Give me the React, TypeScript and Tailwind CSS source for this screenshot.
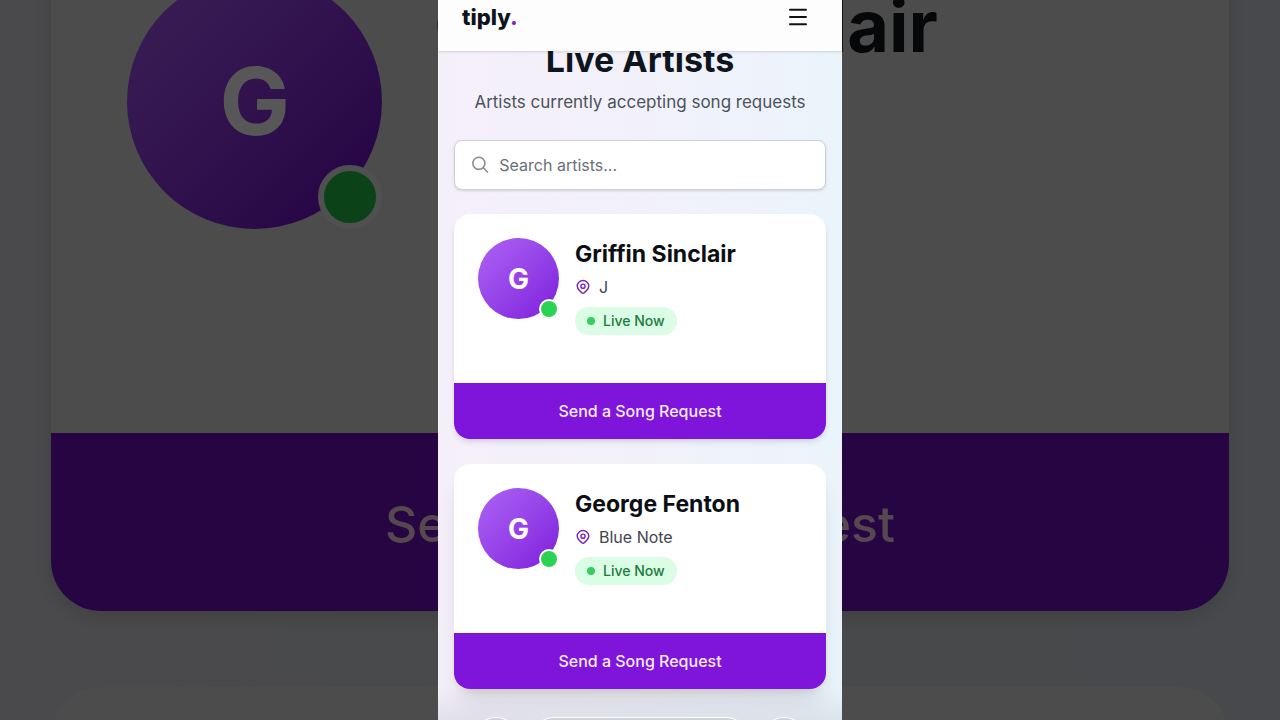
import { useState } from 'react';

type Artist = {
  id: number;
  name: string;
  location: string;
};

const artists: Artist[] = [
  { id: 1, name: 'Griffin Sinclair', location: 'J' },
  { id: 2, name: 'George Fenton', location: 'Blue Note' },
];

function MenuIcon() {
  return (
    <svg width="20" height="18" viewBox="0 0 20 18" fill="none" stroke="currentColor" strokeWidth="2" strokeLinecap="round">
      <path d="M2 1.7h16M2 9h16M2 16.3h16" />
    </svg>
  );
}

function SearchIcon() {
  return (
    <svg width="20" height="20" viewBox="0 0 20 20" fill="none" stroke="currentColor" strokeWidth="1.7" strokeLinecap="round">
      <circle cx="8.6" cy="8.2" r="6.6" />
      <path d="M13.4 13L18 17.6" />
    </svg>
  );
}

function PinIcon() {
  return (
    <svg width="16" height="16" viewBox="0 0 16 16" fill="none" stroke="currentColor" strokeWidth="1.4">
      <path d="M8 14.4C7.4 14.4 2.2 10.7 2.2 7.1a5.8 5.6 0 0 1 11.6 0C13.8 10.7 8.6 14.4 8 14.4z" strokeLinejoin="round" />
      <circle cx="8" cy="7.2" r="2.1" />
    </svg>
  );
}

// Oversized, dimmed copy of the first card behind the page
function Backdrop() {
  return (
    <div
      aria-hidden="true"
      className="absolute inset-0 overflow-hidden bg-linear-to-r from-[#4a4a4d] via-[#48494a] to-[#48494c] px-[4%]"
    >
      <div className="-mt-[102px] overflow-hidden rounded-[50px] bg-[#4c4c4c] shadow-[0_6px_16px_rgba(0,0,0,0.12)]">
        <div className="flex h-[535px] items-start gap-[52px] p-[76px]">
          <div className="relative flex size-[255px] shrink-0 items-center justify-center rounded-full bg-linear-to-br from-[#3c1f56] to-[#250243] text-[94px] font-bold text-[#575757]">
            G
            <span className="absolute right-0 bottom-0 size-[64px] rounded-full border-[6px] border-[#505050] bg-[#0c4218]" />
          </div>
          <p className="text-[72px] leading-[104px] font-bold whitespace-nowrap text-[#050709]">{artists[0].name}</p>
        </div>
        <div className="flex h-[178px] items-center justify-center bg-[#260542] pt-1 text-[50px] font-medium text-[#55494f]">
          Send a Song Request
        </div>
      </div>
      <div className="mt-[76px] h-[200px] rounded-[50px] bg-[#4c4c4c]" />
    </div>
  );
}

function ArtistCard({ artist }: { artist: Artist }) {
  return (
    <article className="overflow-hidden rounded-2xl bg-white shadow-md last:shadow-xl">
      <div className="flex items-start gap-4 px-6 pt-6 pb-12">
        <div className="relative flex size-[81px] shrink-0 items-center justify-center rounded-full bg-linear-to-br from-[#ae62f5] to-[#7f15db] text-[28px] font-bold text-white">
          {artist.name[0]}
          <span className="absolute right-0 bottom-0 size-5 rounded-full border-2 border-white bg-[#2bd354]" />
        </div>
        <div className="min-w-0">
          <h2 className="text-[23px] leading-[33px] font-bold text-[#0b0f14]">{artist.name}</h2>
          <p className="mt-1 flex items-center gap-2 text-base text-[#3f4650]">
            <span className="text-[#7a1fb8]">
              <PinIcon />
            </span>
            {artist.location}
          </p>
          <p className="mt-2 inline-flex h-7 items-center gap-2 rounded-full bg-[#dbfde5] px-3 text-sm font-medium text-[#207a3c]">
            <span className="size-2 rounded-full bg-[#35cf5d]" />
            Live Now
          </p>
        </div>
      </div>
      <button type="button" className="block h-14 w-full bg-[#7f15db] text-base font-medium text-[#f8ebff]">
        Send a Song Request
      </button>
    </article>
  );
}

export default function App() {
  const [query, setQuery] = useState('');

  const visible = artists.filter((a) => a.name.toLowerCase().includes(query.toLowerCase()));

  return (
    <div className="relative h-screen overflow-hidden bg-[#4a4a4c] font-[Inter,sans-serif]">
      <Backdrop />

      <div className="relative mx-auto h-full w-full max-w-[404px] overflow-hidden bg-linear-to-r from-[#f5effa] via-[#f2f1fa] to-[#ebf4fb]">
        <header className="relative z-10 flex h-[51px] items-start justify-between bg-[#fdfdfd] px-6 shadow-sm">
          <a href="#" className="text-[22px] leading-[34px] font-extrabold text-[#0f141c]">
            tiply<span className="text-[#8a1fd0]">.</span>
          </a>
          <button type="button" aria-label="Menu" className="flex h-[34px] items-center px-2.5 text-[#111111]">
            <MenuIcon />
          </button>
        </header>

        <main className="px-4">
          <h1 className="-mt-[11px] text-center text-[34px] leading-10 font-bold text-[#0f151d]">Live Artists</h1>
          <p className="mt-2 text-center text-[17px] leading-7 text-[#4b525d]">Artists currently accepting song requests</p>

          <label className="mt-6 flex h-[50px] items-center gap-2.5 rounded-lg border border-[#cfcfdb] bg-white px-4 text-[#8d8d90] shadow-sm">
            <SearchIcon />
            <input
              type="text"
              aria-label="Search artists"
              placeholder="Search artists..."
              value={query}
              onChange={(e) => setQuery(e.target.value)}
              className="w-full bg-transparent text-base text-[#111827] outline-none placeholder:text-[#6b7078]"
            />
          </label>

          <div className="mt-6 flex flex-col gap-[25px]">
            {visible.map((artist) => (
              <ArtistCard key={artist.id} artist={artist} />
            ))}
          </div>
        </main>

        {/* floating browser controls, mostly below the fold */}
        <div className="pointer-events-none absolute inset-x-0 bottom-0 h-8 bg-linear-to-b from-transparent to-[#c3cbd3]/40" />
        <div className="absolute inset-x-0 -bottom-[45px] flex h-12 items-start justify-center gap-2.5">
          <span className="size-12 rounded-full border border-white bg-[#cfd1d8]" />
          <span className="h-12 w-[220px] rounded-full border border-white bg-[#cfd1d8]" />
          <span className="size-12 rounded-full border border-white bg-[#cfd1d8]" />
        </div>
      </div>
    </div>
  );
}
